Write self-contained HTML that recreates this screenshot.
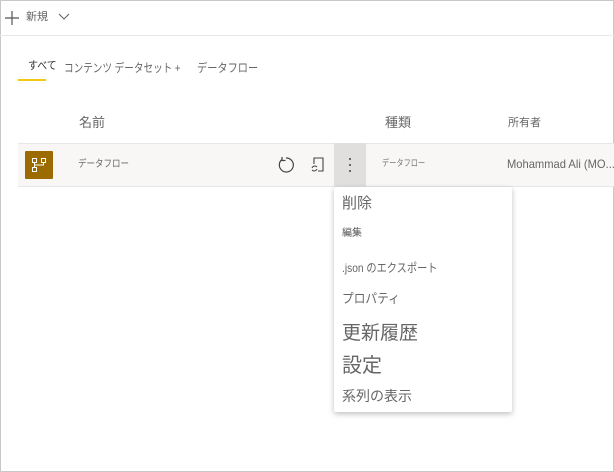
<!DOCTYPE html>
<html><head><meta charset="utf-8"><style>
*{margin:0;padding:0;box-sizing:border-box}
body{width:614px;height:472px;background:#fff;font-family:"Liberation Sans","Noto Sans CJK JP",sans-serif;color:#444;position:relative;overflow:hidden}
.frame{position:absolute;left:0;top:0;width:614px;height:472px;border:1px solid #c8c8c8}
.a{position:absolute;white-space:nowrap;line-height:1;transform-origin:0 0}
.row{position:absolute;left:18px;top:143px;width:596px;height:44px;background:#f8f7f6;border-top:1px solid #e6e6e6;border-bottom:1px solid #e6e6e6}
.menu{position:absolute;left:334px;top:187px;width:178px;height:225px;background:#fff;box-shadow:0 2px 6px rgba(0,0,0,.25);border-radius:2px}
.menu .a{left:8px;color:#666}
</style></head><body>
<div class="frame"></div>
<div class="a" style="left:0;top:35px;width:614px;height:1px;background:#e8e8e8"></div>
<svg class="a" style="left:4px;top:10px" width="16" height="16"><path d="M8 1V15M1 8H15" stroke="#555" stroke-width="1.2"/></svg>
<div class="a" style="left:26px;top:12px;font-size:11px;color:#666">新規</div>
<svg class="a" style="left:58px;top:13px" width="12" height="8"><path d="M1 1L6 6L11 1" stroke="#666" fill="none" stroke-width="1.1"/></svg>
<div class="a" style="left:28px;top:61px;font-size:11px;color:#333;transform:scaleX(.9)">すべて</div>
<div class="a" style="left:18px;top:79px;width:28px;height:2px;background:#f2c811"></div>
<div class="a" style="left:64px;top:62px;font-size:12px;color:#666;transform:scaleX(.8)">コンテンツ データセット +</div>
<div class="a" style="left:197px;top:62px;font-size:12px;color:#666;transform:scaleX(.85)">データフロー</div>
<div class="a" style="left:79px;top:116px;font-size:13px;color:#666">名前</div>
<div class="a" style="left:385px;top:116px;font-size:13px;color:#666">種類</div>
<div class="a" style="left:508px;top:118px;font-size:11px;color:#666">所有者</div>
<div class="row"></div>
<div class="a" style="left:25px;top:151px;width:28px;height:28px;background:#9c6b00;border-radius:1px"></div>
<svg class="a" style="left:31px;top:157px" width="16" height="16"><g stroke="#fff" fill="none" stroke-width="1"><rect x="1.5" y="1.5" width="4" height="4"/><rect x="10.5" y="1.5" width="4" height="4"/><rect x="1.5" y="10.5" width="4" height="4"/><path d="M3.5 5.5V10.5M12.5 5.5V8H3.5"/></g></svg>
<div class="a" style="left:78px;top:160px;font-size:10px;color:#666;transform:scaleX(.85)">データフロー</div>
<svg class="a" style="left:277px;top:156px" width="18" height="18"><path d="M5 3.5A7 7 0 1 0 9 2" stroke="#444" fill="none" stroke-width="1.2"/><path d="M5 1V4.5H8.5" stroke="#444" fill="none" stroke-width="1.2"/></svg>
<svg class="a" style="left:310px;top:156px" width="16" height="18"><path d="M4 8V2H13V15H8" stroke="#444" fill="none" stroke-width="1.1"/><path d="M2 12A3 3 0 0 1 7 11M7 13A3 3 0 0 1 2 14" stroke="#444" fill="none" stroke-width="1"/></svg>
<div class="a" style="left:334px;top:143px;width:32px;height:44px;background:#e1dfdd"></div>
<svg class="a" style="left:348px;top:157px" width="4" height="16"><circle cx="2" cy="2" r="1" fill="#444"/><circle cx="2" cy="8" r="1" fill="#444"/><circle cx="2" cy="14" r="1" fill="#444"/></svg>
<div class="a" style="left:382px;top:159px;font-size:9px;color:#777;transform:scaleX(.8)">データフロー</div>
<div class="a" style="left:507px;top:158px;font-size:12px;color:#666;transform:scaleX(.93)">Mohammad Ali (MO...</div>
<div class="menu">
<div class="a" style="top:9px;font-size:15px">削除</div>
<div class="a" style="top:42px;font-size:10px;color:#555">編集</div>
<div class="a" style="top:75px;font-size:12px;transform:scaleX(.85)">.json のエクスポート</div>
<div class="a" style="top:105px;font-size:13px;transform:scaleX(.9)">プロパティ</div>
<div class="a" style="top:137px;font-size:19px">更新履歴</div>
<div class="a" style="top:169px;font-size:20px">設定</div>
<div class="a" style="top:202px;font-size:14px">系列の表示</div>
</div>
</body></html>
